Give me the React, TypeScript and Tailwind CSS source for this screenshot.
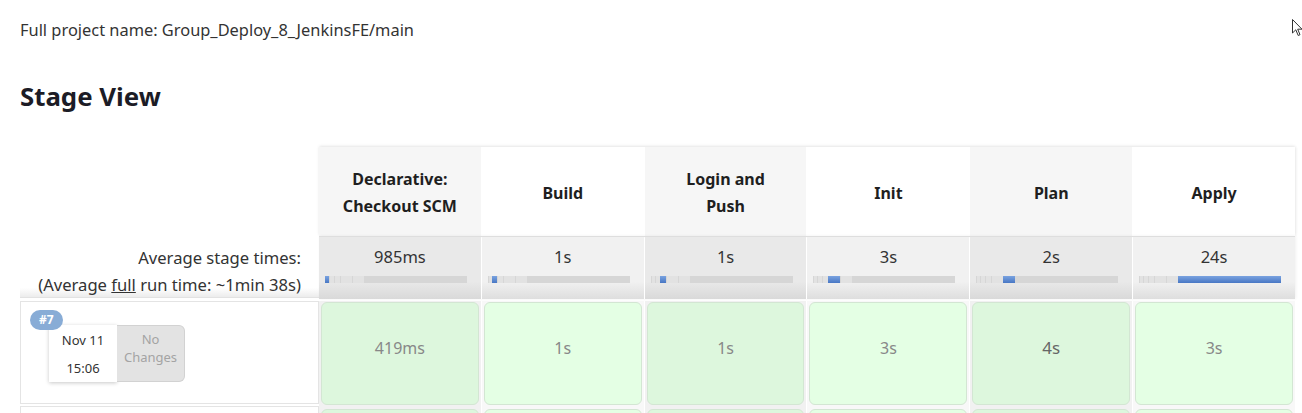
const BOUNDS = [0, 4, 9, 15, 27, 39, 142];

const stages = [
  { name: ["Declarative:", "Checkout SCM"], avg: "985ms" },
  { name: ["Build"], avg: "1s" },
  { name: ["Login and", "Push"], avg: "1s" },
  { name: ["Init"], avg: "3s" },
  { name: ["Plan"], avg: "2s" },
  { name: ["Apply"], avg: "24s" },
];

// only the first build is visible, the second row peeks in under the fold
const build = { id: 7, date: "Nov 11", time: "15:06", times: ["419ms", "1s", "1s", "3s", "4s", "3s"] };

const headBg = ["bg-[#f6f6f6]", "bg-white"];
const avgBg = [
  "bg-[linear-gradient(to_bottom,#e9e9e9_0%,#e9e9e9_72%,#d9d9d9_100%)]",
  "bg-[linear-gradient(to_bottom,#f1f1f1_0%,#f1f1f1_72%,#dedede_100%)]",
];
const cellBg = ["bg-[#f1f1f1]", "bg-[#f8f8f8]"];
const boxBg = ["bg-[#ddf7dd]", "bg-[#e4ffe4]"];

function StageBar({ idx }: { idx: number }) {
  return (
    <svg width="142" height="7" className="block">
      <defs>
        <linearGradient id={"blue" + idx} x1="0" y1="0" x2="0" y2="1">
          <stop offset="0" stopColor="#7aa3e0" />
          <stop offset="1" stopColor="#4877c4" />
        </linearGradient>
      </defs>
      <rect x="0" y="0" width="142" height="7" fill="#d6d6d6" />
      {BOUNDS.slice(0, 5).map((b, j) =>
        j === idx ? null : (
          <rect key={j} x={b + 1} y="0" width={BOUNDS[j + 1] - b - 1} height="7" fill="#e2e2e2" />
        )
      )}
      <rect x={BOUNDS[idx]} y="0" width={BOUNDS[idx + 1] - BOUNDS[idx]} height="7" fill={`url(#blue${idx})`} />
    </svg>
  );
}

function Cursor() {
  return (
    <svg width="11" height="18" viewBox="0 0 11 18" className="absolute left-[1292px] top-[19px]">
      <path d="M0.5 0.5 L0.5 14 L3.8 10.8 L6.2 16.5 L8 15.7 L5.7 10.2 L10 10.2 Z" fill="white" stroke="#333" strokeWidth="1" />
    </svg>
  );
}

export default function App() {
  return (
    <div className="relative w-[1302px] h-[413px] overflow-hidden bg-white font-['Noto_Sans','Open_Sans',sans-serif] text-[#333]">
      <Cursor />
      <div className="pl-[20px] pt-[18px]">
        <p className="text-[16.4px] leading-[24px] text-[#333]">Full project name: Group_Deploy_8_JenkinsFE/main</p>
        <h2 className="mt-[38px] text-[25.8px] leading-[33px] font-bold text-[#1c1c26]">Stage View</h2>

        <div className="mt-[34px] w-[1275px]">
          {/* header */}
          <div className="flex">
            <div className="w-[299px] shrink-0" />
            <div className="grid grid-cols-6 gap-x-px flex-1 shadow-[0_-1px_3px_rgba(0,0,0,0.08),1px_0_3px_rgba(0,0,0,0.06)]">
              {stages.map((s, i) => (
                <div
                  key={i}
                  className={`${headBg[i % 2]} h-[89px] pt-[3px] flex flex-col items-center justify-center text-[16px] leading-[27px] font-bold text-[#1f1f1f]`}
                >
                  {s.name.map((l) => (
                    <span key={l}>{l}</span>
                  ))}
                </div>
              ))}
            </div>
          </div>

          {/* averages */}
          <div className="flex">
            <div className="w-[299px] shrink-0 h-[62px] pr-[18px] pt-[8px] text-right text-[16.6px] leading-[27px] text-[#333] bg-[linear-gradient(to_bottom,#ffffff_0%,#ffffff_85%,#ececec_100%)] border-b border-[#e2e2e2]">
              <div>Average stage times:</div>
              <div className="whitespace-nowrap">
                (Average <span className="underline">full</span> run time: ~1min 38s)
              </div>
            </div>
            <div className="grid grid-cols-6 gap-x-px flex-1 border-t border-[#dedede] shadow-[1px_0_3px_rgba(0,0,0,0.06)]">
              {stages.map((s, i) => (
                <div key={i} className={`${avgBg[i % 2]} h-[62px] flex flex-col`}>
                  <div className="pt-[8px] text-center text-[16.5px] leading-[24px] text-[#333]">{s.avg}</div>
                  <div className="mt-[7px] pl-[6px]">
                    <StageBar idx={i} />
                  </div>
                </div>
              ))}
            </div>
          </div>

          {/* build #7 */}
          <div className="flex mt-[2px]">
            <div className="relative w-[299px] shrink-0 h-[103px] border border-[#e4e4e4] bg-white pl-[28px] pt-[23px]">
              <span className="absolute left-[9px] top-[8px] z-10 rounded-full bg-[#88acd6] px-[9px] text-[12px] leading-[20px] font-bold text-white">
                #{build.id}
              </span>
              <div className="flex">
                <div className="w-[68px] h-[57px] bg-white shadow-[0_1px_4px_rgba(0,0,0,0.22)] flex flex-col items-center justify-center text-[13px] leading-[28px] text-[#333]">
                  <span>{build.date}</span>
                  <span>{build.time}</span>
                </div>
                <div className="w-[68px] h-[57px] bg-[#e3e3e3] border border-l-0 border-[#d2d2d2] rounded-r-[6px] flex flex-col items-center pt-[4px] text-[13px] leading-[18px] text-[#a4a4a4]">
                  <span>No</span>
                  <span>Changes</span>
                </div>
              </div>
            </div>
            <div className="grid grid-cols-6 gap-x-px flex-1">
              {build.times.map((t, i) => (
                <div key={i} className={`${cellBg[i % 2]} h-[105px] pt-[1px] px-[2px] pb-[1px]`}>
                  <div
                    className={`${boxBg[i % 2]} h-full pb-[12px] rounded-[6px] border border-[#d3e6d3] flex items-center justify-center ${
                      t === "4s" ? "text-[17px] text-[#666]" : "text-[16px] text-[#888]"
                    }`}
                  >
                    {t}
                  </div>
                </div>
              ))}
            </div>
          </div>

          {/* next build, cut off by the window */}
          <div className="flex">
            <div className="w-[299px] shrink-0 h-[103px] border border-[#e4e4e4] bg-white" />
            <div className="grid grid-cols-6 gap-x-px flex-1">
              {stages.map((_, i) => (
                <div key={i} className={`${cellBg[i % 2]} h-[105px] pt-[3px] px-[2px] pb-[1px]`}>
                  <div className={`${boxBg[i % 2]} h-full rounded-[6px] border border-[#d3e6d3]`} />
                </div>
              ))}
            </div>
          </div>
        </div>
      </div>
    </div>
  );
}
